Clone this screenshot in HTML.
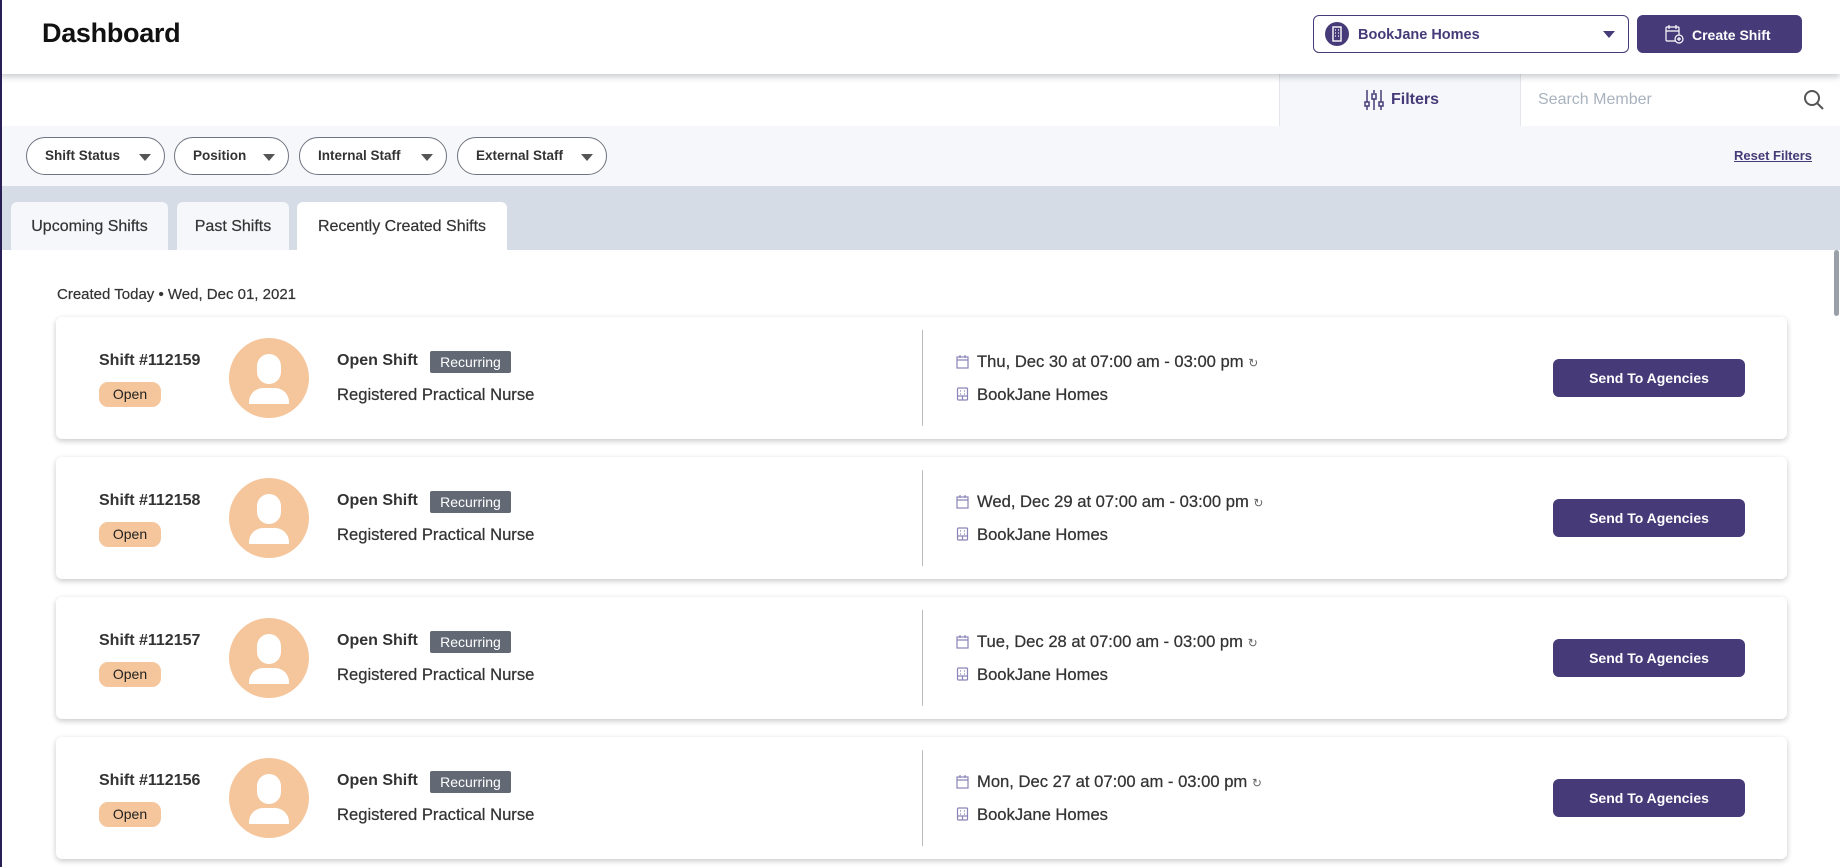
<!DOCTYPE html>
<html><head><meta charset="utf-8"><style>
*{box-sizing:border-box;margin:0;padding:0}
body{width:1840px;height:867px;overflow:hidden;background:#fff;font-family:"Liberation Sans",sans-serif;color:#2f2f3b;position:relative}
.abs{position:absolute}
.lb{position:absolute;left:0;top:0;width:2px;height:867px;background:#2a1f55;z-index:9}
.hdr{left:0;top:0;width:1840px;height:74px;background:#fff;box-shadow:0 3px 6px rgba(80,90,100,.3);z-index:5}
.title{left:42px;top:18px;font-size:27px;font-weight:bold;color:#111;letter-spacing:-.3px}
.loc{left:1313px;top:15px;width:316px;height:38px;border:1.5px solid #463b78;border-radius:6px}
.create{left:1637px;top:15px;width:165px;height:38px;background:#463b78;border-radius:6px;color:#fff;font-size:14px;font-weight:bold}
.chip{top:137px;height:38px;border:1px solid #6f7480;border-radius:19px;background:#fff;font-size:13.5px;font-weight:bold;color:#333;padding-left:18px;line-height:36px}
.chip:after{content:"";position:absolute;right:13px;top:16px;border-left:6px solid transparent;border-right:6px solid transparent;border-top:7px solid #555}
.tab{top:202px;height:48px;background:#f5f7fa;border-radius:6px 6px 0 0;font-size:16px;color:#333;text-align:center;line-height:50px;-webkit-text-stroke:.2px #333}
.card{left:56px;width:1731px;height:122px;background:#fff;border-radius:6px;box-shadow:0 2px 6px rgba(0,0,0,.22)}
.sn{left:43px;top:35px;font-size:16px;font-weight:bold;color:#333}
.pill{left:43px;top:65px;width:62px;height:25px;border-radius:9px;background:#f5c59b;font-size:14px;color:#222;text-align:center;line-height:25px}
.av{left:173px;top:21px;width:80px;height:80px;border-radius:50%;background:#f5c59b;overflow:hidden}
.os{left:281px;top:35px;font-size:16px;font-weight:bold;color:#333}
.rec{left:374px;top:34px;width:81px;height:22px;background:#626874;color:#fff;font-size:14px;text-align:center;line-height:22px;border-radius:2px}
.rpn{left:281px;top:68px;font-size:16.6px;color:#333;-webkit-text-stroke:.25px #333}
.div{left:866px;top:13px;width:1px;height:96px;background:#bbb}
.dt{left:921px;top:35px;font-size:16.6px;color:#333;-webkit-text-stroke:.25px #333}
.bh{left:921px;top:68px;font-size:16.6px;color:#333;-webkit-text-stroke:.25px #333}
.btn{left:1497px;top:42px;width:192px;height:38px;background:#463b78;border-radius:6px;color:#fff;font-size:14px;font-weight:bold;text-align:center;line-height:38px}
</style></head><body>
<div class="lb"></div>
<div class="abs hdr">
 <div class="abs title">Dashboard</div>
 <div class="abs loc">
  <div class="abs" style="left:11px;top:6px;width:24px;height:24px;border-radius:50%;background:#463b78">
   <svg width="24" height="24" viewBox="0 0 24 24"><rect x="8" y="5" width="8" height="14" fill="none" stroke="#fff" stroke-width="1.4"/><path d="M10 8h1M13 8h1M10 11h1M13 11h1M10 14h1M13 14h1" stroke="#fff" stroke-width="1.3"/></svg>
  </div>
  <div class="abs" style="left:44px;top:11px;font-size:14.5px;font-weight:bold;color:#463b78">BookJane Homes</div>
  <div class="abs" style="right:13px;top:15px;border-left:6px solid transparent;border-right:6px solid transparent;border-top:7px solid #463b78"></div>
 </div>
 <div class="abs create">
  <svg class="abs" style="left:27px;top:9px" width="20" height="20" viewBox="0 0 20 20" fill="none" stroke="#fff" stroke-width="1.2"><rect x="2" y="3" width="13" height="14" rx="1"/><path d="M2 7h13M5 1v4M12 1v4"/><circle cx="15" cy="15" r="4" fill="#463b78"/><path d="M15 13v4M13 15h4"/></svg>
  <div class="abs" style="left:55px;top:12px">Create Shift</div>
 </div>
</div>
<div class="abs" style="left:1279px;top:74px;width:242px;height:52px;background:#f5f7fa;border-left:1px solid #e3e6ea;border-right:1px solid #e3e6ea"></div>
<svg class="abs" style="left:1364px;top:89px" width="20" height="22" viewBox="0 0 20 22" fill="none" stroke="#463b78" stroke-width="1.5"><path d="M3 1v12M3 17v4M10 1v3M10 10v11M17 1v12M17 17v4"/><rect x="1" y="13" width="4" height="4"/><rect x="8" y="5" width="4" height="5"/><rect x="15" y="13" width="4" height="4"/></svg>
<div class="abs" style="left:1391px;top:91px;font-size:16px;font-weight:bold;color:#463b78">Filters</div>
<div class="abs" style="left:1538px;top:91px;font-size:16px;color:#a9b2bf">Search Member</div>
<svg class="abs" style="left:1803px;top:89px" width="22" height="22" viewBox="0 0 22 22" fill="none" stroke="#555" stroke-width="2"><circle cx="9" cy="9" r="7"/><path d="M14 14l6 6"/></svg>
<div class="abs" style="left:2px;top:126px;width:1838px;height:60px;background:#f5f7fa"></div>
<div class="abs chip" style="left:26px;width:139px">Shift Status</div>
<div class="abs chip" style="left:174px;width:115px">Position</div>
<div class="abs chip" style="left:299px;width:148px">Internal Staff</div>
<div class="abs chip" style="left:457px;width:150px">External Staff</div>
<div class="abs" style="left:1734px;top:148px;font-size:13px;font-weight:bold;color:#463b78;text-decoration:underline">Reset Filters</div>
<div class="abs" style="left:2px;top:186px;width:1838px;height:64px;background:#d5dce5"></div>
<div class="abs tab" style="left:11px;width:157px">Upcoming Shifts</div>
<div class="abs tab" style="left:177px;width:112px">Past Shifts</div>
<div class="abs tab" style="left:297px;width:210px;background:#fff">Recently Created Shifts</div>
<div class="abs" style="left:1834px;top:250px;width:5px;height:66px;background:#9aa0a8;border-radius:3px"></div>
<div class="abs" style="left:57px;top:286px;font-size:15px;color:#333;-webkit-text-stroke:.2px #333">Created Today • Wed, Dec 01, 2021</div>

<div id="cards"></div>
<script>
var d=[["112159","Thu, Dec 30"],["112158","Wed, Dec 29"],["112157","Tue, Dec 28"],["112156","Mon, Dec 27"]];
var h="";
d.forEach(function(c,i){
h+='<div class="abs card" style="top:'+(317+i*140)+'px">'+
'<div class="abs sn">Shift #'+c[0]+'</div><div class="abs pill">Open</div>'+
'<div class="abs av"><div class="abs" style="left:28px;top:16px;width:24px;height:30px;border-radius:12px;background:#fff"></div><div class="abs" style="left:20px;top:50px;width:40px;height:16px;border-radius:14px 14px 0 0;background:#fff"></div></div>'+
'<div class="abs os">Open Shift</div><div class="abs rec">Recurring</div>'+
'<div class="abs rpn">Registered Practical Nurse</div><div class="abs div"></div>'+
'<svg class="abs" style="left:900px;top:38px" width="13" height="14" viewBox="0 0 13 14" fill="none" stroke="#8a84b8" stroke-width="1.2"><rect x="1" y="2" width="11" height="11"/><path d="M1 5h11M4 0v3M9 0v3"/></svg>'+
'<div class="abs dt">'+c[1]+' at 07:00 am - 03:00 pm <span style="font-size:12px;color:#666;-webkit-text-stroke:0">&#x21BB;</span></div>'+
'<svg class="abs" style="left:900px;top:70px" width="13" height="14" viewBox="0 0 13 14" fill="none" stroke="#8a84b8" stroke-width="1.2"><rect x="1.5" y="1" width="10" height="12" rx="1"/><path d="M4 4h1M8 4h1M4 7h1M8 7h1M1.5 9h10M6.5 9v4"/></svg>'+
'<div class="abs bh">BookJane Homes</div>'+
'<div class="abs btn">Send To Agencies</div></div>';
});
document.getElementById("cards").innerHTML=h;
</script>
</body></html>
